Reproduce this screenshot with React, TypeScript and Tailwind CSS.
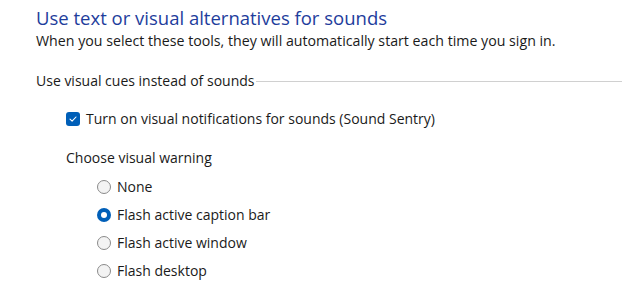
import { useState } from 'react'

const options = ['None', 'Flash active caption bar', 'Flash active window', 'Flash desktop']

function Radio({ checked }: { checked: boolean }) {
  if (checked) {
    return (
      <span className="flex h-[14px] w-[14px] items-center justify-center rounded-full bg-[#005fb8]">
        <span className="h-[6px] w-[6px] rounded-full bg-white" />
      </span>
    )
  }
  return <span className="h-[14px] w-[14px] rounded-full border border-[#8a8a8a] bg-[#f3f3f3]" />
}

export default function App() {
  const [warning, setWarning] = useState(1)
  const [sentry, setSentry] = useState(true)

  return (
    <div
      className="h-[287px] w-[622px] overflow-hidden bg-white pl-[36px] pt-[5px] text-[#1a1a1a]"
      style={{ fontFamily: '"Open Sans", "Noto Sans", sans-serif' }}
    >
      <h1 className="text-[18.5px] leading-[26px] text-[#1e3d9c]">Use text or visual alternatives for sounds</h1>
      <p className="text-[14.2px] leading-[20px]">
        When you select these tools, they will automatically start each time you sign in.
      </p>

      <div className="mt-[20px] flex items-center">
        <span className="text-[14px] leading-[20px]">Use visual cues instead of sounds</span>
        <span className="ml-[2px] h-px flex-1 bg-[#d0d0d0]" />
      </div>

      <label className="ml-[30px] mt-[18px] flex items-center gap-[6px] text-[14px] leading-[20px]" onClick={() => setSentry(!sentry)}>
        <span className="flex h-[14px] w-[14px] items-center justify-center rounded-[3px] bg-[#005fb8]">
          {sentry ? (
            <svg width="10" height="10" viewBox="0 0 10 10" fill="none">
              <path d="M2 5.2 L4.1 7.2 L8 3" stroke="white" strokeWidth="1.1" strokeLinecap="round" strokeLinejoin="round" />
            </svg>
          ) : null}
        </span>
        Turn on visual notifications for sounds (Sound Sentry)
      </label>

      <p className="ml-[30px] mt-[19px] text-[14px] leading-[20px]">Choose visual warning</p>

      <div className="ml-[61px] mt-[9px] flex flex-col gap-[8px]">
        {options.map((o, i) => (
          <div key={o} className="flex items-center gap-[6px] text-[14px] leading-[20px]" onClick={() => setWarning(i)}>
            <Radio checked={warning === i} />
            {o}
          </div>
        ))}
      </div>
    </div>
  )
}
